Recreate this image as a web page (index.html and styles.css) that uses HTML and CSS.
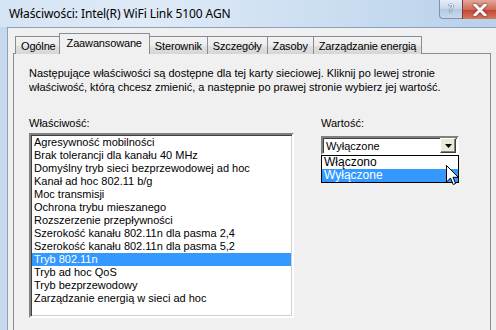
FILE: index.html
```html
<!DOCTYPE html>
<html lang="pl">
<head>
<meta charset="utf-8">
<link rel="stylesheet" href="styles.css">
</head>
<body>
<div class="window">
  <div class="titlebar">
    <span class="title">Właściwości: Intel(R) WiFi Link 5100 AGN</span>
    <div class="caption">
      <div class="cap-btn help">?</div>
      <div class="cap-btn close">
        <svg width="14" height="12" viewBox="0 0 14 12"><path d="M2 1 L12 11 M12 1 L2 11" stroke="#fff" stroke-width="3" stroke-linecap="square" fill="none"/></svg>
      </div>
    </div>
  </div>
  <div class="frame">
    <div class="client">
      <div class="tabs">
        <div class="tab">Ogólne</div>
        <div class="tab active">Zaawansowane</div>
        <div class="tab">Sterownik</div>
        <div class="tab">Szczegóły</div>
        <div class="tab">Zasoby</div>
        <div class="tab">Zarządzanie energią</div>
      </div>
      <div class="page">
        <p class="desc">Następujące właściwości są dostępne dla tej karty sieciowej. Kliknij po lewej stronie<br>właściwość, którą chcesz zmienić, a następnie po prawej stronie wybierz jej wartość.</p>
        <div class="props">
          <div class="col-left">
            <div class="label">Właściwość:</div>
            <ul class="listbox">
              <li>Agresywność mobilności</li>
              <li>Brak tolerancji dla kanału 40 MHz</li>
              <li>Domyślny tryb sieci bezprzewodowej ad hoc</li>
              <li>Kanał ad hoc 802.11 b/g</li>
              <li>Moc transmisji</li>
              <li>Ochrona trybu mieszanego</li>
              <li>Rozszerzenie przepływności</li>
              <li>Szerokość kanału 802.11n dla pasma 2,4</li>
              <li>Szerokość kanału 802.11n dla pasma 5,2</li>
              <li class="sel">Tryb 802.11n</li>
              <li>Tryb ad hoc QoS</li>
              <li>Tryb bezprzewodowy</li>
              <li>Zarządzanie energią w sieci ad hoc</li>
            </ul>
          </div>
          <div class="col-right">
            <div class="label">Wartość:</div>
            <div class="combo">
              <span class="combo-text">Wyłączone</span>
              <span class="combo-btn"><svg width="7" height="4" viewBox="0 0 7 4"><path d="M0 0 H7 L3.5 4 Z" fill="#000"/></svg></span>
              <ul class="dropdown">
                <li>Włączono</li>
                <li class="sel">Wyłączone</li>
              </ul>
              <svg class="cursor" width="13" height="21" viewBox="0 0 13 21"><path d="M0.5 0.5 V17 L4.5 13 L7.2 19.5 L9.6 18.5 L7 12.3 H12.3 Z" fill="#fff" stroke="#000" stroke-width="1" stroke-linejoin="miter"/></svg>
            </div>
          </div>
        </div>
      </div>
    </div>
  </div>
</div>
</body>
</html>
```

FILE: styles.css
```css
* { box-sizing: border-box; }
html, body { margin: 0; padding: 0; }
body { width: 496px; height: 330px; overflow: hidden; background: #c9dbee; }

.window {
  width: 496px;
  height: 330px;
  display: flex;
  flex-direction: column;
  background: linear-gradient(to right, #c6d8ec, #d4e3f3 40%, #c3d7ec);
  font-family: "Liberation Sans", Arial, sans-serif;
  font-size: 11px;
  color: #000;
}

.titlebar {
  height: 27px;
  display: flex;
  align-items: flex-start;
  background: linear-gradient(to right, #d5e4f4, #dfeaf7 30%, #c9dcf0 70%, #b9d0ea);
  flex-shrink: 0;
}
.title {
  font-family: "Noto Sans", sans-serif;
  font-size: 12px;
  padding: 5px 0 0 9px;
  color: #000;
  letter-spacing: -0.1px;
}
.caption { margin-left: auto; display: flex; }
.cap-btn {
  height: 19px;
  display: flex;
  align-items: center;
  justify-content: center;
}
.help {
  width: 23px;
  border: 1px solid #7d93ad;
  border-top: none;
  border-right: none;
  border-bottom-left-radius: 4px;
  background: linear-gradient(#e6eef8, #c7d7ea 50%, #b4c9e2 51%, #c7d8ec);
  font-family: "DejaVu Sans", sans-serif;
  font-size: 12px;
  color: #fff;
  text-shadow: 0 0 1px #29415f, 0 0 1px #29415f;
}
.close {
  width: 34px;
  border-left: 1px solid #7a3a3a;
  background: linear-gradient(#e3a69b, #cf6c5c 50%, #c2442f 51%, #d47a62);
}
.close svg { filter: drop-shadow(0 0 1px #5a1a12); }

.frame {
  flex: 1;
  display: flex;
  padding-left: 7px;
  min-height: 0;
}
.client {
  flex: 1;
  background: #f0f0f0;
  border-left: 1px solid #8aa1bb;
  border-top: 1px solid #8aa1bb;
  padding: 5px 0 0 5px;
  display: flex;
  flex-direction: column;
}

.tabs {
  display: flex;
  align-items: flex-end;
  padding-left: 2px;
  height: 21px;
  position: relative;
  z-index: 1;
  margin-bottom: -1px;
}
.tab {
  height: 18px;
  padding: 2px 5px 0 5px;
  border: 1px solid #898c95;
  border-bottom: none;
  margin-right: -1px;
  background: linear-gradient(#f3f3f3, #ececec 50%, #e0e0e0 51%, #d6d6d6);
  white-space: nowrap;
  line-height: 14px;
  letter-spacing: -0.15px;
}
.tab.active {
  height: 21px;
  background: #f0f0f0;
  margin: 0 -1px 0 -2px;
  padding: 2px 7px 0 7px;
  position: relative;
  z-index: 2;
}

.page {
  flex: 1;
  border: 1px solid #898c95;
  border-bottom: none;
  margin-right: 5px;
  padding: 12px 0 0 15px;
  background: #f0f0f0;
}
.desc {
  margin: 0;
  line-height: 14px;
  white-space: nowrap;
}
.props {
  display: flex;
  gap: 27px;
  margin-top: 23px;
}
.label { line-height: 13px; height: 16px; }
.col-left { width: 265px; }
.listbox {
  list-style: none;
  margin: 0;
  padding: 1px;
  height: 185px;
  background: #fff;
  border: 2px solid;
  border-color: #808080 #ffffff #ffffff #808080;
  box-shadow: inset 1px 1px 0 #404040, inset -1px -1px 0 #d4d0c8;
}
.listbox li {
  height: 13px;
  line-height: 13px;
  padding-left: 2px;
  white-space: nowrap;
}
.listbox li.sel { background: #3399ff; color: #fff; }

.combo {
  position: relative;
  margin-top: 3px;
  width: 138px;
  height: 19px;
  background: #fff;
  border: 2px solid;
  border-color: #808080 #ffffff #ffffff #808080;
  box-shadow: inset 1px 1px 0 #404040;
  display: flex;
  align-items: center;
}
.combo-text { padding-left: 3px; flex: 1; }
.combo-btn {
  width: 16px;
  height: 15px;
  margin-right: 1px;
  background: #ece9d8;
  border: 1px solid;
  border-color: #fff #404040 #404040 #fff;
  box-shadow: inset -1px -1px 0 #808080;
  display: flex;
  align-items: center;
  justify-content: center;
}
.dropdown {
  position: absolute;
  left: -2px;
  top: 17px;
  width: 138px;
  margin: 0;
  padding: 0;
  list-style: none;
  background: #fff;
  border: 1px solid #000;
}
.dropdown li {
  height: 13px;
  line-height: 13px;
  padding-left: 2px;
  font-size: 12px;
}
.dropdown li.sel { background: #3399ff; color: #fff; }
.cursor {
  position: absolute;
  left: 123px;
  top: 27px;
}
```
